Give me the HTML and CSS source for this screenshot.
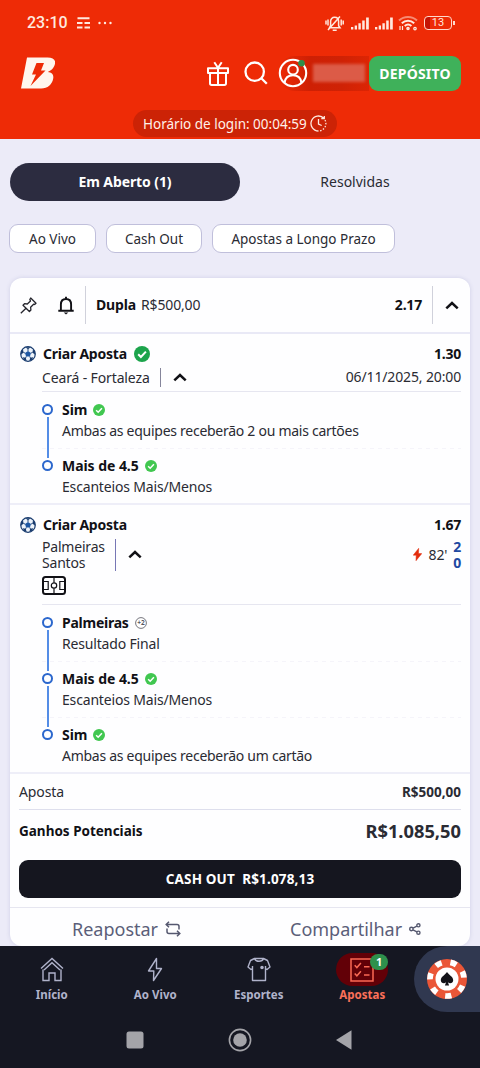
FILE: index.html
```html
<!DOCTYPE html>
<html lang="pt-BR">
<head>
<meta charset="utf-8">
<title>Apostas</title>
<link rel="stylesheet" href="styles.css">
</head>
<body>
<svg class="defs" width="0" height="0">
  <symbol id="check" viewBox="0 0 16 16"><circle cx="8" cy="8" r="8" fill="currentColor"/><path d="M4.2 8.300l2.700 2.700 5-5.400" fill="none" stroke="#fff" stroke-width="2"/></symbol>
  <symbol id="chev" viewBox="0 0 14 9"><path d="M1.300 7.400L7 2l5.700 5.400" fill="none" stroke="#111116" stroke-width="2.500"/></symbol>
  <symbol id="ball" viewBox="0 0 16 16"><circle cx="8" cy="8" r="7.300" fill="#eef4fb" stroke="#173a6d" stroke-width="1.200"/><path d="M8 4.900l3 2.200-1.100 3.500H6.100L5 7.100z" fill="#1e57a2"/><g fill="#173a6d"><path d="M5.300 1.300h5.400L8 3.300zM1 6.100l2-2.900.5 3.200L1.200 8.700zM15 6.100l-2-2.900-.5 3.200 2.300 2.300zM2.700 11.300l3.100.4.800 3.200-2.600-1.200zM13.300 11.300l-3.100.4-.8 3.200 2.600-1.200z"/></g><path d="M8 3v2M3.300 6.300L5 7.100M12.700 6.300L11 7.100M5.600 12l.6-1.500M10.400 12l-.6-1.500" stroke="#173a6d" stroke-width=".9"/></symbol>
  <symbol id="signal" viewBox="0 0 20 13"><path d="M1 10h2.300v2.500H1zM4.700 8.400H7v4.100H4.700zM8.400 6.300h2.400v6.200H8.400zM12.200 3.600h2.500v8.900h-2.500zM16.100.5h2.700v12h-2.700z" fill="#ffe9df"/></symbol>
</svg>
<header class="top">
  <div class="status">
    <span class="clock">23:10</span>
    <svg class="st-app" width="13" height="12" viewBox="0 0 13 12"><path d="M.5 1.200h12M0 6h5.500M7.500 6H13M0 10.500h5.500M7.500 10.500H13" stroke="#ffe9df" stroke-width="2" fill="none"/></svg>
    <svg class="st-dots" width="14" height="4" viewBox="0 0 14 4"><g fill="#ffe9df"><circle cx="1.500" cy="2" r="1.200"/><circle cx="7" cy="2" r="1.200"/><circle cx="12.500" cy="2" r="1.200"/></g></svg>
    <span class="grow"></span>
    <svg class="st-bell" width="19" height="17" viewBox="0 0 19 17" fill="none" stroke="#ffe9df" stroke-width="1.500"><path d="M4.500 12.700h10.500l-1.400-2V6.500c0-2.500-1.700-4.300-4-4.300S5.600 4 5.600 6.500v4.200zM7.700 15.200h4M1 5.500v4M3 4.500v6M18.200 5.500v4M16.200 4.500v6M3 15L15 1.500"/></svg>
    <svg class="st-sig" width="20" height="13"><use href="#signal"/></svg>
    <svg class="st-sig2" width="20" height="13"><use href="#signal"/></svg>
    <svg class="st-wifi" width="20" height="16" viewBox="0 0 20 16" fill="none" stroke="#ffe9df" stroke-width="2"><path d="M1 5.500C6 .7 14 .7 19 5.500" opacity=".5"/><path d="M3.800 8.300c3.600-3.400 8.800-3.400 12.400 0M6.700 11c2-1.800 4.700-1.800 6.700 0"/><circle cx="10" cy="13.500" r=".8"/><path d="M2 11v4M4.500 11v4" stroke-width="1.200"/><circle cx="17" cy="13.600" r="1.200" stroke-width="1.300"/></svg>
    <span class="battery">13</span>
  </div>
  <div class="brand">
    <svg class="logo" width="34" height="32" viewBox="0 0 34 32"><path fill="#fff6ee" fill-rule="evenodd" d="M6 .5h20.500c5.500 0 8.300 2.300 7.500 6.300-.6 3.600-3.500 6.700-7.200 8.200 4.300.5 6.100 2.800 5.400 6.500-1 6-5.500 10-12 10H0zM15.500 6L11 17.500h4L9.500 29 24.500 13.500H20L23 6z"/></svg>
    <span class="grow"></span>
    <svg class="gift" width="22" height="25" viewBox="0 0 22 25" fill="none" stroke="#fff" stroke-width="2"><path d="M1 7.300h20v4.800H1zM3 12v10.300q0 1.600 1.600 1.600h12.800q1.600 0 1.600-1.600V12M11 7v17M10.800 6.500L7.300 1.200M11.200 6.500l3.500-5.300" stroke-linejoin="round"/></svg>
    <svg class="search" width="24" height="24" viewBox="0 0 24 24" fill="none" stroke="#fff" stroke-width="2.300"><circle cx="10.700" cy="10.700" r="9.200"/><path d="M17.300 17.300l5.500 5.500"/></svg>
    <div class="account">
      <svg width="30" height="30" viewBox="0 0 30 30" fill="none" stroke="#fff" stroke-width="2.100"><circle cx="15" cy="15" r="13.200"/><circle cx="15" cy="11.700" r="4.800"/><path d="M6.500 24.800c.7-4.700 3.900-7.500 8.500-7.500s7.800 2.800 8.500 7.500"/><circle cx="23.500" cy="5.300" r="3.300" fill="#2f8d4a" stroke="none"/></svg>
      <span class="balance"></span>
    </div>
    <button class="deposit">DEPÓSITO</button>
  </div>
  <div class="login"><span>Horário de login: 00:04:59</span><svg width="17" height="17" viewBox="0 0 17 17" fill="none" stroke="#ffe9df" stroke-width="1.300"><path d="M8.500 16A7.500 7.500 0 1 1 14 3.400M8.500 4v5l3.200 1.500M11.300 3.500h3v-2.600"/><path d="M15 5a7.500 7.500 0 0 1-6 11" stroke-dasharray="1.500 1.500"/></svg></div>
</header>

<main>
  <div class="tabs"><div class="tab on"><span>Em Aberto (1)</span></div><div class="tab"><span>Resolvidas</span></div></div>
  <div class="chips"><span class="chip c1">Ao Vivo</span><span class="chip c2">Cash Out</span><span class="chip c3">Apostas a Longo Prazo</span></div>

  <article class="card">
    <div class="card-head">
      <svg class="pin" width="17" height="17" viewBox="0 0 17 17" fill="none" stroke="#25252d" stroke-width="1.300" stroke-linejoin="round"><path d="M10.700 1l5.300 5.200-1.400 1.300-1-.3-3 3 .3 2.800-1.500 1.500L3 8.200l1.500-1.500 2.800.3 3.200-3-.7-1.500zM6 11.300L.8 16.300"/></svg>
      <svg class="bell" width="16" height="19" viewBox="0 0 16 19"><path d="M.3 14.700h15.400M2.900 14V8.500C2.900 5 5 3 8 3s5.100 2 5.100 5.500V14M8 3V.8" fill="none" stroke="#111116" stroke-width="1.900"/><path d="M5.700 16.500h4.600L8 18.400z" fill="#111116"/></svg>
      <div class="kind"><b>Dupla</b><span>R$500,00</span></div>
      <b class="odd">2.17</b>
      <div class="toggle"><svg width="14" height="9"><use href="#chev"/></svg></div>
    </div>

    <section class="bet">
      <div class="bet-title"><svg width="16" height="16"><use href="#ball"/></svg><b>Criar Aposta</b><svg class="won" width="16" height="16"><use href="#check"/></svg><b class="odd">1.30</b></div>
      <div class="match one"><span class="teams">Ceará - Fortaleza</span><svg width="14" height="9"><use href="#chev"/></svg><span class="date">06/11/2025, 20:00</span></div>
      <ul class="legs">
        <li><b>Sim</b><svg class="ok" width="12" height="12"><use href="#check"/></svg><p class="long">Ambas as equipes receberão 2 ou mais cartões</p></li>
        <li><b>Mais de 4.5</b><svg class="ok" width="12" height="12"><use href="#check"/></svg><p>Escanteios Mais/Menos</p></li>
      </ul>
    </section>

    <section class="bet">
      <div class="bet-title"><svg width="16" height="16"><use href="#ball"/></svg><b>Criar Aposta</b><b class="odd">1.67</b></div>
      <div class="match two"><span class="teams">Palmeiras<br>Santos</span><svg width="14" height="9"><use href="#chev"/></svg>
        <span class="live"><svg width="9" height="13" viewBox="0 0 9 13"><path d="M5.700.3L.2 7.200h3L3 12.700l5.800-7.100H5.500z" fill="#e32c0c" stroke="#e32c0c" stroke-width=".5"/></svg><span class="minute">82'</span><span class="score">2<br>0</span></span>
      </div>
      <div class="pitch"><svg width="24" height="19" viewBox="0 0 24 19" fill="none" stroke="#111116"><rect x="1" y="1" width="22" height="17" rx="2.500" stroke-width="2"/><path d="M12 2v4.700M12 12.300V17M1.500 5.500h4.700v8H1.500M22.500 5.500h-4.700v8h4.700" stroke-width="1.200"/><circle cx="12" cy="9.500" r="2.700" stroke-width="1.200"/></svg></div>
      <ul class="legs">
        <li><b class="team">Palmeiras</b><svg class="ok" width="12" height="12" viewBox="0 0 12 12"><circle cx="6" cy="6" r="5.400" fill="#fff" stroke="#66666f" stroke-width=".9"/><text class="plus" x="6" y="8.300" text-anchor="middle">+2</text></svg><p>Resultado Final</p></li>
        <li><b>Mais de 4.5</b><svg class="ok" width="12" height="12"><use href="#check"/></svg><p>Escanteios Mais/Menos</p></li>
        <li><b>Sim</b><svg class="ok" width="12" height="12"><use href="#check"/></svg><p class="long">Ambas as equipes receberão um cartão</p></li>
      </ul>
    </section>

    <div class="sum stake"><span>Aposta</span><b>R$500,00</b></div>
    <div class="sum gain"><b>Ganhos Potenciais</b><strong>R$1.085,50</strong></div>
    <button class="cashout">CASH OUT&nbsp; R$1.078,13</button>
    <div class="actions">
      <div><span>Reapostar</span><svg width="16" height="16" viewBox="0 0 16 16" fill="none" stroke="#55586f" stroke-width="1.500"><path d="M4 .8L1.200 3.500 4 6.200M1.500 3.500H12q2 0 2 2v3M12 9.800l2.800 2.700L12 15.200M14.500 12.500H4q-2 0-2-2v-3"/></svg></div>
      <div><span>Compartilhar</span><svg width="12" height="12" viewBox="0 0 12 12" fill="none" stroke="#55586f" stroke-width="1.400"><circle cx="2.400" cy="6" r="1.700"/><circle cx="9.400" cy="2.300" r="1.600"/><circle cx="9.400" cy="9.700" r="1.600"/><path d="M4 5.200l3.900-2M4 6.800l3.900 2"/></svg></div>
    </div>
  </article>
</main>

<footer>
  <nav>
    <a><svg width="24" height="25" viewBox="0 0 24 25" fill="none" stroke="#b0b3cb" stroke-width="1.400"><path d="M1 11.500L12 1.500l11 10M4 13l8-7.300 8 7.300M3 12.500v11h6v-7.500h6v7.500h6v-11"/></svg><span>Início</span></a>
    <a><svg width="24" height="25" viewBox="0 0 24 25" fill="none" stroke="#b0b3cb" stroke-width="1.400" stroke-linejoin="round"><path d="M13.500 1.500L5.500 14h5.300L10.500 23.500l8-12h-5z"/></svg><span>Ao Vivo</span></a>
    <a><svg width="24" height="25" viewBox="0 0 24 25" fill="none" stroke="#b0b3cb" stroke-width="1.400" stroke-linejoin="round"><path d="M7.500 1.500h9l4 2L23 10l-3 2.500-1.500-1v12H5.500v-12L4 12.500 1 10l2.500-6.500zM7.500 1.500c1.200 3.700 7.800 3.700 9 0M18.500 11.500V9M5.500 11.500V9"/><circle cx="15" cy="10.500" r="1.100" fill="#b0b3cb"/></svg><span>Esportes</span></a>
    <a class="active"><span class="pill"><svg width="24" height="24" viewBox="0 0 24 24" fill="none" stroke="#fb6a55" stroke-width="1.500"><path d="M1 1h22v22H1zM4.700 7.300l2.200 2.300 4-4.500M4.700 15.500l2.200 2.300 4-4.500M14 8.700h5.500M14 17h5.500"/></svg><i class="badge">1</i></span><span>Apostas</span></a>
    <div class="casino"><svg width="40" height="40" viewBox="0 0 40 40"><circle cx="20" cy="20" r="20" fill="#ea5637"/><circle cx="20" cy="20" r="17" fill="none" stroke="#fff" stroke-width="5.700" stroke-dasharray="6.300 8.954" stroke-dashoffset="9" transform="rotate(2 20 20)"/><circle cx="20" cy="20" r="11.500" fill="#fff"/><path d="M20 13c1.800 3 6.200 4.600 6.200 8.300 0 3-3.600 4-5.300 1.900l1.200 3.300h-4.200l1.200-3.300c-1.700 2.100-5.300 1.100-5.300-1.900C13.800 17.600 18.200 16 20 13z" fill="#131318"/></svg></div>
  </nav>
  <div class="sys"><svg width="18" height="18"><rect x=".5" y=".5" width="17" height="17" rx="2.500" fill="#a4a4a9"/></svg><svg width="24" height="24"><circle cx="12" cy="12" r="10.600" fill="none" stroke="#a4a4a9" stroke-width="1.600"/><circle cx="12" cy="12" r="6.800" fill="#a4a4a9"/></svg><svg width="18" height="20"><path d="M1 10L16.500.3v19.400z" fill="#a4a4a9"/></svg></div>
</footer>
</body>
</html>
```

FILE: styles.css
```css
*,*::before,*::after{box-sizing:border-box}
body{margin:0;width:480px;height:1068px;overflow:hidden;background:#ecebf8;font:14px/20px "Noto Sans","Open Sans",sans-serif;color:#2a2b33;display:flex;flex-direction:column}
svg{display:block;flex:none}
.defs{position:absolute}
.grow{flex:1}
b{color:#111116}
span,b{white-space:nowrap}
button{border:0;padding:0;font-family:inherit;font-weight:700;color:#fff}
.top{height:139px;background:#ee2b06;flex:none}
.status{display:flex;align-items:center;height:46px;padding:0 26px 0 27px}
.clock{font:500 16px/20px Roboto,sans-serif;letter-spacing:0;color:#ffe9df}
.st-app{margin-left:9px}
.st-dots{margin-left:8px}
.st-bell{margin-right:6px}
.st-sig,.st-sig2{margin-right:4px}
.status .st-bell{margin-left:-3px}
.st-wifi{margin-right:6px}
.battery{width:28px;height:14px;margin-right:2px;border:1.500px solid #ffd9cc;border-radius:4px;font:11px/12px Roboto,sans-serif;text-align:center;color:#ffe9df;background:linear-gradient(90deg,#c41404 5px,transparent 5px);position:relative}
.battery::after{content:"";position:absolute;right:-4px;top:4px;width:2px;height:4px;background:#ffd9cc}
.brand{display:flex;align-items:center;height:54px;padding:0 19px 0 21px}
.gift{margin-right:15px}
.search{margin-right:10px}
.account{display:flex;align-items:center;height:35px;width:91px;gap:5px;border-radius:17px 0 0 17px;background:linear-gradient(90deg,#ee2b06,#ce2004 35%,#cf2205 70%,#dc2504)}
.balance{width:52px;height:18px;background:#dc5b47;filter:blur(1.500px)}
.deposit{width:92px;height:35px;border-radius:9px;background:#3fb15a;font-size:14px;letter-spacing:.2px}
.login{display:flex;align-items:center;gap:3px;height:27px;width:204px;margin:10px 0 0 133px;padding-left:10px;border-radius:14px;background:#cc2306;color:#fff1e9;font-size:13.500px}
main{padding:24px 10px 0 9px;height:807px;flex:none;overflow:hidden}
.tabs{display:flex;height:38px;padding-left:1px}
.tab{width:230px;border-radius:19px;line-height:38px;text-align:center;flex:none}
.tab.on{background:#2c2c40;color:#fff;font-weight:700;letter-spacing:-.1px}
.chips{display:flex;gap:10px;margin-top:23px;font-size:13.500px}
.chip{height:29px;border:1px solid #c0bfdb;border-radius:9px;background:#fff;line-height:28px;text-align:center}
.c1{width:87px}.c2{width:96px}.c3{width:183px}
.card{margin:25px 0 0 1px;height:668px;background:#fefeff;border-radius:12px;box-shadow:0 0 4px #cfcfe6}
.card-head{display:flex;align-items:center;height:56px;border-bottom:2px solid #e9e9f6;padding:0 0 0 10px}
.bell{margin-left:21px}
.kind{display:flex;gap:5px;margin-left:11px;padding-left:10px;height:38px;line-height:38px;border-left:1px solid #d0d1db;flex:1;letter-spacing:-.15px}
.card-head .odd{margin-right:10px}
.toggle{height:38px;width:38px;border-left:1px solid #d0d1db;display:flex;align-items:center;justify-content:center}
.odd{letter-spacing:-.2px}
.bet{border-bottom:2px solid #eeeef8;padding:10px 9px 0 10px}
.bet-title{display:flex;align-items:center;height:20px}
.bet-title b{margin-left:7px;letter-spacing:-.22px}
.bet-title .won{margin-left:7px;color:#1ca44c}
.bet-title .odd{margin-left:auto}
.match{display:flex;align-items:center;margin-left:22px;letter-spacing:-.14px}
.match.one{height:28px;padding-bottom:1px;border-bottom:1px solid #e6e6f0}
.teams{border-right:1px solid #85859b;padding-right:10px;margin-right:12px}
.one .teams{line-height:19px}
.date{margin-left:auto}
.match.two{height:39px;line-height:16px;letter-spacing:-.2px}
.two .teams{border-color:#7777b5}
.live{margin-left:auto;display:flex;align-items:center;gap:7px}
.minute{margin-right:-1px}
.score{color:#2149a2;font-weight:700;text-align:right}
.pitch{margin-left:22px;height:31px;padding-top:2px;border-bottom:1px solid #e6e6f0}
.legs{list-style:none;margin:0;padding:7px 0 0 22px}
.legs li{position:relative;display:grid;grid-template-columns:auto 1fr;column-gap:6px;align-items:center;height:56px;grid-template-rows:21px 21px;align-content:start;padding-left:20px}
.legs li:last-child{height:48px}
.legs b{letter-spacing:-.05px}
.legs .team{letter-spacing:-.25px}
.legs p{grid-column:1/3;margin:0;white-space:nowrap;letter-spacing:-.17px}
.legs .long{letter-spacing:-.27px}
.legs li::before{content:"";position:absolute;left:0;top:5px;width:11px;height:11px;border:2px solid #2b67cd;border-radius:50%}
.legs li:not(:last-child)::after{content:"";position:absolute;left:5px;top:18px;width:1.500px;height:41px;background:#548de6}
.legs li:not(:last-child){background:linear-gradient(90deg,transparent 50%,#f5f4fa 50%) 20px 49px/8px 1px repeat-x}
.ok{color:#41c750}
.plus{font:700 6.500px "Noto Sans",sans-serif;fill:#55555f}
.sum{display:flex;align-items:center;justify-content:space-between;margin:0 9px}
.stake{height:36px;border-bottom:1px solid #dedfed}
.stake span{letter-spacing:-.1px}
.stake b{font-size:13.500px;color:#2a2b33}
.gain{height:42px}
.gain b{font-size:13.500px}
.gain strong{font-size:18.300px}
.cashout{display:block;width:442px;height:38px;margin:8px 0 0 9px;border-radius:9px;background:#15161f;font-size:13.500px;letter-spacing:.15px}
.actions{display:flex;margin-top:9px;height:41px;border-top:1px solid #e6e6f0;font-size:18px;color:#5b5e79}
.actions div{display:flex;align-items:center;gap:7px;padding-top:2px}
.actions div:first-child{padding-left:62px;width:280px}
footer{height:122px;background:#151722;flex:none}
nav{display:flex;height:66px}
nav a{width:103.500px;display:flex;flex-direction:column;align-items:center;padding-top:11px;color:#b0b3cb;font-weight:700;font-size:11.500px;line-height:16px}
nav a>span:last-child{margin-top:5px}
nav .active{color:#fb7059;padding-top:7px}
.pill{position:relative;width:52px;height:33px;border-radius:17px;background:#620007;display:flex;align-items:center;justify-content:center}
nav .active>span:last-child{margin-top:1px}
.badge{position:absolute;right:0;top:1px;width:18px;height:16px;border-radius:8px;background:#2e914c;color:#fff;font:700 11px/16px "Noto Sans",sans-serif;text-align:center}
.casino{flex:1;height:66px;border-radius:33px 0 0 33px;background:#303850;padding:13px 0 0 13px}
.sys{display:flex;align-items:center;height:56px;padding:0 127px 0 126px;justify-content:space-between}
```
